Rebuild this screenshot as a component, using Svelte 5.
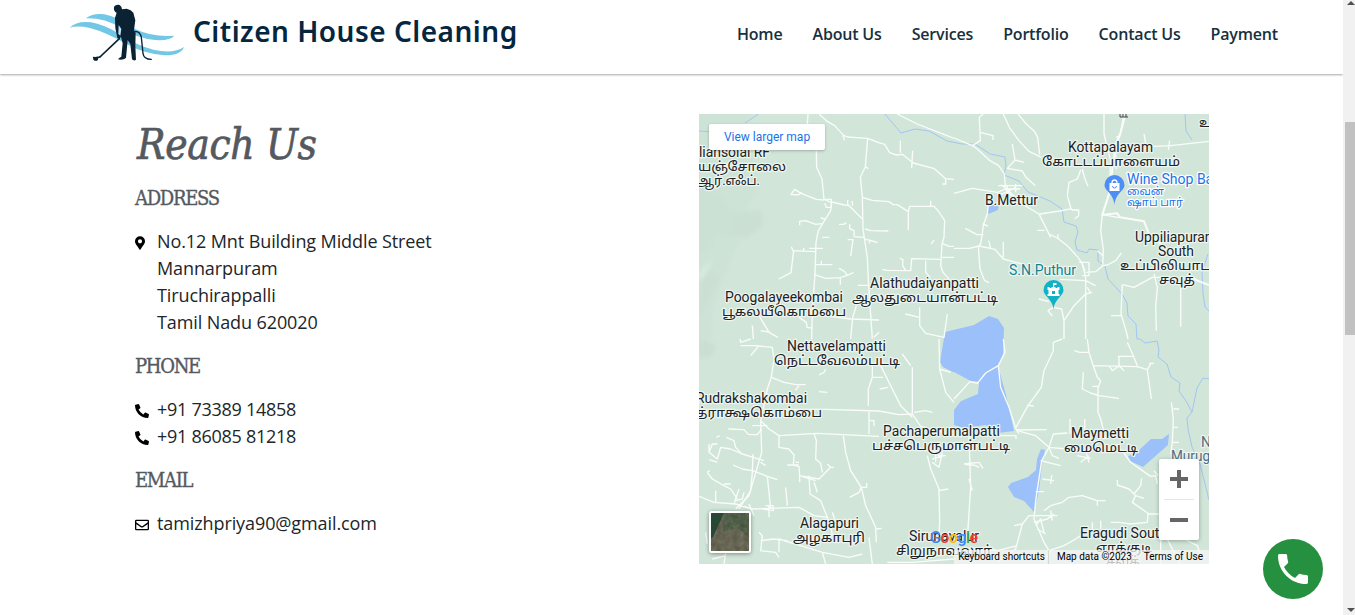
<script>
  const nav = ['Home', 'About Us', 'Services', 'Portfolio', 'Contact Us', 'Payment'];
  const address = ['No.12 Mnt Building Middle Street', 'Mannarpuram', 'Tiruchirappalli', 'Tamil Nadu 620020'];
  const phones = ['+91 73389 14858', '+91 86085 81218'];

  // text, x, baseline, width, size, kind
  const labels = [
    ['liansolai RF', 0, 43, 71, 14, ''],
    ['யஞ்சோலை', -1, 57, 88, 13, ''],
    ['ஆர்.எஃப்.', -2, 71, 63, 13, ''],
    ['Poogalayeekombai', 26, 188, 118, 14, ''],
    ['பூகலயீகொம்பை', 23, 202, 124, 13, ''],
    ['Alathudaiyanpatti', 171, 174, 109, 14, ''],
    ['ஆலதுடையான்பட்டி', 153, 188, 146, 13, ''],
    ['Kottapalayam', 369, 38, 85, 14, ''],
    ['கோட்டப்பாளையம்', 343, 52, 138, 13, ''],
    ['B.Mettur', 286, 91, 53, 14, ''],
    ['S.N.Puthur', 310, 161, 67, 14, 'teal'],
    ['Wine Shop Bar', 428, 70, 91, 14, 'blue'],
    ['வைன்', 428, 81, 37, 11, 'blue'],
    ['ஷாப் பார்', 428, 92, 56, 11, 'blue'],
    ['Uppiliapuram', 436, 128, 82, 14, ''],
    ['South', 459, 142, 36, 14, ''],
    ['உப்பிலியாட', 421, 156, 90, 13, ''],
    ['சவுத்', 460, 170, 36, 13, ''],
    ['உ', 500, 13, 13, 13, ''],
    ['Nettavelampatti', 88, 237, 99, 14, ''],
    ['நெட்டவேலம்பட்டி', 75, 251, 126, 13, ''],
    ['Rudrakshakombai', -3, 289, 111, 14, ''],
    ['த்ராக்ஷகொம்பை', -3, 303, 126, 13, ''],
    ['Pachaperumalpatti', 184, 322, 117, 14, ''],
    ['பச்சபெருமாள்பட்டி', 173, 336, 138, 13, ''],
    ['Alagapuri', 101, 414, 59, 14, ''],
    ['அழகாபுரி', 94, 428, 72, 13, ''],
    ['Sirunavalur', 210, 427, 70, 14, ''],
    ['சிறுநாவலூர்', 197, 441, 96, 13, ''],
    ['Maymetti', 372, 324, 58, 14, ''],
    ['மைமெட்டி', 365, 338, 74, 13, ''],
    ['Eragudi South', 381, 424, 87, 14, ''],
    ['எரக்குடி', 397, 438, 56, 13, ''],
    ['சவுத்', 407, 452, 34, 13, ''],
    ['N', 502, 333, 10, 14, 'slate'],
    ['Murug', 472, 347, 39, 14, 'slate']
  ];
</script>

<div class="page">
  <main>
    <header>
      <div class="brand">
        <svg class="logo" width="125" height="70" viewBox="0 0 375 210">
          <g fill="#72c6e6">
            <path d="M14 83Q35 62 78 67Q115 73 163 101Q217 137 265 149Q325 163 357 141Q347 167 298 166Q240 162 186 133Q124 97 75 84Q37 76 14 83Z" />
            <path d="M62 55Q84 39 118 43Q160 51 211 87Q261 112 328 107Q315 123 270 120Q215 114 167 83Q117 53 62 55Z" />
          </g>
          <g fill="#0a2233">
            <path d="M147 20Q153 12 164 15Q171 20 171 28L185 26Q199 29 205 38L211 61L207 90L212 98L211 137L213 179Q207 184 201 178L196 132L188 120L183 174Q174 181 159 178Q161 173 169 170L173 130L168 111Q162 118 157 114L151 84L150 54L155 38Q145 34 147 20Z" />
            <path d="M85 172L99 170V179L96 182H88L85 178Z" />
          </g>
          <path d="M161 75L160 102L166 107L169 87Z" fill="#b9e4f3" />
          <g fill="none" stroke="#0a2233" stroke-linecap="round">
            <path d="M163 116L108 168Q104 174 86 173" stroke-width="5" />
            <path d="M211 94Q226 95 229 112L234 160Q236 178 259 178" stroke-width="4" />
          </g>
        </svg>
        <span class="name">Citizen House Cleaning</span>
      </div>
      <nav>
        {#each nav as item}<a href="#top">{item}</a>{/each}
      </nav>
    </header>

    <div class="content">
      <section class="contact">
        <h1>Reach Us</h1>
        <h2>ADDRESS</h2>
        <div class="row">
          <svg class="pin" viewBox="0 0 384 512"><path d="M172 501C27 291 0 270 0 192a192 192 0 1 1 384 0c0 78-27 99-172 309a24 24 0 0 1-40 0zM192 272a80 80 0 1 0 0-160 80 80 0 0 0 0 160z" /></svg>
          <div>{#each address as line}<p>{line}</p>{/each}</div>
        </div>
        <h2>PHONE</h2>
        {#each phones as phone}
          <div class="row digits">
            <svg viewBox="0 0 512 512"><path d="M493 25l-104-24a24 24 0 0 0-27 14l-48 112a24 24 0 0 0 7 28l61 50a371 371 0 0 1-177 177l-50-61a24 24 0 0 0-28-7L15 362a24 24 0 0 0-14 27l24 104a24 24 0 0 0 23 19c257 0 464-208 464-464a24 24 0 0 0-19-23z" transform="matrix(-1 0 0 1 512 0)" /></svg>
            <p>{phone}</p>
          </div>
        {/each}
        <h2>EMAIL</h2>
        <div class="row">
          <svg viewBox="0 0 512 512"><path d="M464 64H48a48 48 0 0 0-48 48v288a48 48 0 0 0 48 48h416a48 48 0 0 0 48-48V112a48 48 0 0 0-48-48zm0 48v41c-22 18-58 47-134 106-17 13-50 46-74 45-24 1-57-32-74-45C106 200 70 171 48 153v-41h416zM48 400V215c23 18 55 43 104 82 22 17 60 55 104 55 44 0 81-37 104-55 49-39 81-64 104-82v185H48z" /></svg>
          <p>tamizhpriya90@gmail.com</p>
        </div>
      </section>

      <section class="map">
        <svg class="canvas" width="510" height="450" viewBox="0 0 510 450">
          <defs><filter id="soft"><feGaussianBlur stdDeviation="2" /></filter></defs>
          <rect width="510" height="450" fill="#d1e6d9" />
          <g filter="url(#soft)" fill="#c9dfd2">
            <path d="M-5 -5H52L45 25L55 45L62 70L50 90L44 120L30 150L15 190L12 225L0 245H-5Z" opacity=".4" />
            <path d="M0 72Q22 76 28 92L42 100L36 125L18 118L10 135L0 140Z" opacity=".7" />
            <path d="M40 100L62 95L64 112L46 125L35 118Z" opacity=".8" />
            <path d="M0 168L12 155L20 165L8 190L0 205Z" opacity=".6" />
            <path d="M0 225L18 232L12 243L0 244Z" />
          </g>
          <path d="M0 160L14 144L8 156L0 168Z" fill="#dcede1" filter="url(#soft)" />

          <!-- reservoirs -->
          <g fill="#9cc0f9">
            <path d="M246 218L275 211L290 202L299 205L305 214L304 240L299 252L307 281L315 317L299 319L287 311L265 314L255 311V296L262 287L279 280L280 268L272 267L244 253L241 248Z" />
            <path d="M255 258L271 267L280 268L278 279L264 286L255 290Z" fill="#d1e6d9" />
            <path d="M342 335L346 336L343 350L340 377L335 398L325 387L315 383L309 373L312 369L329 363L337 356L338 345Z" />
            <path d="M429 342L437 339L452 325L463 325L470 320L469 331L444 353L431 347Z" />
            <path d="M289 91L300 91L299 96L289 100Z" />
          </g>

          <!-- streams -->
          <g fill="none" stroke="#a3c5f2" stroke-width="1" stroke-linejoin="round">
            <path d="M0 17L15 18M46 9L61 -1M185 -1L202 19L216 15L230 17L248 27L263 30L276 30L291 40L306 43L307 52L305 61L320 67L329 78L351 87L363 95L365 108L377 112L379 118L376 128L378 136L388 139L390 135L399 136L399 147L406 152L409 165L423 180L428 189L429 202L437 210L438 225L441 225L446 229L458 227L460 236L459 243L468 250L472 263L481 269L480 277L487 287L493 298L488 304L489 315L493 333L501 350L510 386" />
            <path d="M486 0L487 17L493 26M493 298L498 274L504 264L510 265M509 140L503 158L504 180L506 193L510 197" />
          </g>

          <!-- roads, drawn at three units per pixel in each quarter -->
          <g class="roads" transform="scale(.33333)">
            <path d="M360 0L386 23L407 35L434 64L445 69L506 73L539 86L557 91L572 116L592 123L610 121L643 147L706 164L740 194L765 196M432 62L436 79M506 73L499 158L484 190L490 249L492 345L505 430L508 500L520 675M594 0L655 30L765 73M327 0L325 30M352 110L353 160L369 195L375 256L398 266L395 290L358 350L351 385L348 480L340 590L338 675" />
            <path d="M375 258L352 256L306 238L287 226L276 241L298 243L308 234M377 256H397V280L382 280L377 268M398 264L437 273L449 274L490 315M446 257V273M459 261L461 275M302 334V322L320 320L350 331L370 329M365 312L378 315M490 250L520 259L570 263L583 272L595 272L628 293V348M628 293L632 277L705 277L720 294L737 320L735 370L729 390L725 456L732 475L755 500M695 260V276M498 345L515 350L568 351M420 331L434 331L442 326M452 331V344L465 350L466 368L495 370M446 377L462 377L455 426M498 376L514 379L536 386M514 379L510 387" />
            <path d="M277 398L282 410L349 413M284 410L276 476L239 495M314 402V412M330 403H372M370 370H391M351 452L400 452M367 440V452M347 482L380 493L424 491L450 482L463 476M445 483L436 472L420 463M424 491V512M550 466L565 469L635 470L638 434L725 436M602 433L612 437L611 455L620 470M680 440V475L694 491M477 514H509M604 80V116M641 110L638 162M499 158L508 164M740 194V210L730 210M697 390L705 378M730 388L750 397H765M730 430H765M619 600L662 610M662 580V635L680 658L735 670L745 600M340 600L455 615L540 618M472 575L461 610L455 675M180 605L210 655L237 670M185 650L215 655M160 635L163 675M300 610L322 625L324 640L338 642M525 670L540 655" />
          </g>
          <g class="roads" transform="translate(255 0) scale(.33333)">
            <path d="M0 72L55 95L70 105L108 140L134 155L151 180L155 225M55 95L79 80L76 10L88 0M79 55L117 65V78M148 0L166 40L195 80L225 112L262 130M192 0L217 30L241 52L251 70L257 122M175 90L183 138L160 163L205 171L216 190L244 215M183 138L210 145M0 238L55 223L130 235L155 225L180 255L255 300L285 360L310 372L340 395L372 430L385 450L395 490V675M257 300L318 291L353 284M353 288H374V305L362 314M340 245L345 205L370 195L380 168M340 245L352 288M385 165L393 196L402 217" />
            <path d="M133 215H205M135 245L185 220M142 212L185 250M160 215V245M155 225H198M185 210V235M103 270L100 300L89 330L80 390L73 397L78 465L92 500L105 506M34 343L69 362L89 362M85 330L102 336M0 403H47L75 396L123 406L148 435L205 450M104 380L110 403M148 383V430M250 349H272M285 360L290 370M312 360V372" />
            <path d="M450 0V60L470 140L465 240L445 302L495 311M510 0L500 55L484 90L487 165M486 70L500 65M565 90L600 97L650 95L765 82M570 60L575 88M647 80L643 108M445 302L440 350L448 405L446 455L425 473L395 475M447 455L460 453L485 440L502 417M447 425L430 410M505 512L540 520L595 490H640M505 512L501 600L516 650L522 675M471 605H502M600 480L610 520L605 580L607 650M680 490V638M395 540L360 575L330 620V675M330 620L323 585L298 580L282 590L295 606M375 445H405V485H385M393 470L380 440M395 500L425 515M400 520L410 538M395 540L415 535M318 496L395 500M255 555L285 563" />
          </g>
          <g class="roads main" transform="translate(255 0) scale(.33333)">
            <path d="M512 10L500 55L484 100L465 240L445 302L490 298L498 310L570 322L585 360L620 390M700 480L730 500L765 513" />
          </g>
          <g class="roads" transform="translate(0 225) scale(.33333)">
            <path d="M125 20L170 20L220 25L225 60L217 115L205 150L185 245L188 340L150 470L110 510M217 115L255 130L290 137H320M123 0L125 10L155 0M155 50L180 20M290 153L300 140M360 158L385 160M260 211L380 211L540 216L600 227L640 225L665 262L765 290M185 245L210 270L240 290L355 283L430 287L540 292M520 80V115L508 150V200M510 218V285M520 115H552M545 80L570 130L605 200L640 235M542 150L568 145M640 85L640 225M610 45L635 80M720 0L722 90L740 160L765 190M722 90L755 100M645 220L680 215L700 220M512 245H525V262" />
            <path d="M380 90L375 100L360 108M88 270L135 272L148 286L175 287L188 270M160 260H205M240 290V325L270 330L285 348L283 378L300 382L302 410L360 420L395 385H405M345 283L352 305L350 360L365 373L370 400M265 378H298M302 410V430M330 410L333 465L365 485L385 535M30 315V340L55 360L65 325L95 330L130 345L195 365M30 340L40 315L55 315M52 295L62 290M30 362L55 370M82 295L105 305L110 325L128 345M185 370L200 380M162 345L160 400L155 455L120 510M102 378L130 390L160 395L205 412L235 422M25 400L40 420L75 440L95 450L115 480M25 400L32 395M205 412L215 510M75 435H95M0 472L45 490L110 495L160 510L300 505L345 530L385 535" />
            <path d="M260 445L265 500M150 495L165 530M200 500H222V515M210 500V535M192 510L225 515M105 495L120 450M110 485L130 480L135 460M50 455V490M433 290L440 340L455 395L487 445L500 500L530 565L532 610M487 445L480 460L452 475M487 445H503V432M685 350L695 390L720 450L722 550L720 585M720 455L748 450M700 360L735 350M700 370L720 385L730 340M710 320V370M715 350H740M290 370H300M345 430L355 460M310 413L350 425M395 385L385 375" />
            <path d="M180 580L190 590L185 635L230 640L240 655M185 605L225 600L265 605M240 640V600L370 640L450 655L490 645M370 640L380 675M510 595L520 675M532 570L548 568M80 640L75 675M40 660L80 650M20 580L25 615M385 535L395 560L400 590M400 520L410 550M565 670H640L765 660" />
          </g>
          <g class="roads" transform="translate(255 225) scale(.33333)">
            <path d="M148 0L153 40L133 80L140 145L165 205L186 270L200 278L245 290L285 325L340 330M133 80L95 102L70 133L48 128L0 180M325 0L298 10V35L270 95L262 145L222 200L186 265M219 199L239 201M186 273L278 272M0 290H186V300M45 290L50 445L40 600M30 375L75 370L87 388M35 377L60 378L75 385M45 420L55 455M186 270L195 285" />
            <path d="M400 0L405 40L417 78L430 115L440 125L432 148V220L440 240L455 300M361 35L377 40H405M417 80L550 83L580 92L592 180M520 10L537 48L550 80M492 52H537M495 52V85M465 80L475 95L495 80L510 95M585 73H600M580 92L590 75M388 100L385 150L410 162L435 170L495 178M415 142H432M652 190L658 240L655 310L650 345M658 210H675M658 265H672M655 310H675M285 325L263 365L245 485L240 540L270 610L285 635M285 325L298 285L340 282M285 325L295 350L315 358M348 240V285M260 365L320 380M265 420L300 425M293 408L290 435M245 458H270M392 240V270" />
            <path d="M485 315L512 345L530 370L565 395L590 412L605 410L610 435M600 395L612 410M490 422V438L525 450L545 470L535 490L585 525L615 525M545 470L570 478M540 465L560 440L563 418M535 490L545 470M270 515L290 500L325 490L345 475L385 470L430 485H455M430 485V500M582 525L580 550L530 555L495 550H470M235 530H310M240 550L280 540L300 525M245 560L260 540L270 580M250 570L275 585M290 515L295 545M180 560L205 555L225 530H235M205 555L185 630L130 670M285 635L330 620L365 600L380 590M100 625L130 635L190 620M290 635L270 670M370 350L410 358M395 335L405 370M380 370L405 350M440 545V570M415 550V570M620 520V675M640 600L660 640L680 675M690 600L730 620L740 650" />
          </g>

          {#each labels as [text, x, y, width, size, kind]}
            <text class="label {kind}" {x} {y} font-size={size} textLength={width} lengthAdjust="spacingAndGlyphs">{text}</text>
          {/each}
          <path d="M421 -1V3H427V-1M424 0V3M427 3H429" stroke="#444" fill="none" />

          <g transform="translate(415.5 71)">
            <path d="M0 20C-1 8-10 6-10 0a10 10 0 0 1 20 0C10 6 1 8 0 20Z" fill="#4c8df6" />
            <path d="M-5-2H5V6H-5Z" fill="#fff" /><path d="M-2.5-2a2.5 3 0 0 1 5 0" fill="none" stroke="#fff" stroke-width="1.3" /><path d="M-2 1a2 2 0 0 0 4 0" fill="none" stroke="#4c8df6" />
          </g>
          <g transform="translate(354.5 176)">
            <path d="M0 19C-1 9-10 6-10 0a10 10 0 0 1 20 0C10 6 1 9 0 19Z" fill="#12b1c5" />
            <path d="M-6 6V4H-5V0H-6V-3H-4V-2H-2V-3H-.5V-7H3V-5H.7V-3H2V-2H4V-3H6V0H5V4H6V6ZM-1.5 4H1.5V1H-1.5Z" fill="#fff" fill-rule="evenodd" />
          </g>
          <text class="google" x="231" y="429" textLength="48" lengthAdjust="spacing"><tspan fill="#4285f4">G</tspan><tspan fill="#ea4335">o</tspan><tspan fill="#fbbc05">o</tspan><tspan fill="#4285f4">g</tspan><tspan fill="#34a853">l</tspan><tspan fill="#ea4335">e</tspan></text>
        </svg>

        <a class="larger" href="#map">View larger map</a>
        <div class="thumb">
          <svg width="38" height="38" viewBox="0 0 38 38">
            <defs><filter id="ground" x="0" y="0" width="1" height="1"><feTurbulence type="fractalNoise" baseFrequency=".18" numOctaves="3" seed="7" /><feColorMatrix values="0 0 0 0 .36  0 0 0 0 .38  0 0 0 0 .28  .9 .7 0 0 -.45" /></filter></defs>
            <rect width="38" height="38" fill="#424d37" />
            <path d="M12 0L0 28V38H38V24L26 15L13 12Z" fill="#5a5847" />
            <path d="M13 0H38V21L27 15L12 18Z" fill="#3f5039" />
            <rect width="38" height="38" filter="url(#ground)" opacity=".5" />
            <path d="M0 0H13L2 24L0 25Z" fill="#214432" opacity=".85" />
          </svg>
        </div>
        <div class="zoom">
          <button aria-label="Zoom in"><svg width="18" height="18" viewBox="0 0 18 18"><path d="M7 0h4v7h7v4h-7v7H7v-7H0V7h7z" /></svg></button>
          <i></i>
          <button aria-label="Zoom out"><svg width="18" height="18" viewBox="0 0 18 18"><path d="M0 7h18v4H0z" /></svg></button>
        </div>
        <div class="legal"><span class="keys">Keyboard shortcuts</span><span class="data">Map data ©2023</span><span class="terms">Terms of Use</span></div>
      </section>
    </div>

    <a class="call" href="#call" aria-label="Call"><svg width="40" height="40" viewBox="0 0 24 24"><path d="M6.6 10.8c1.4 2.8 3.8 5.1 6.6 6.6l2.2-2.2c.3-.3.7-.4 1-.2 1.1.4 2.3.6 3.6.6.6 0 1 .4 1 1V20c0 .6-.4 1-1 1C10.6 21 3 13.4 3 4c0-.6.4-1 1-1h3.5c.6 0 1 .4 1 1 0 1.2.2 2.5.6 3.6.1.3 0 .7-.2 1z" /></svg></a>
  </main>
  <aside><b class="up"></b><b class="bar"></b><b class="down"></b></aside>
</div>

<style>
  :global(body) { margin: 0; overflow: hidden; background: #fff; }
  .page { display: flex; height: 615px; width: 1355px; overflow: hidden; font-family: "Open Sans", sans-serif; }
  main { width: 1343px; position: relative; overflow: hidden; }
  header { height: 74px; box-sizing: border-box; display: flex; justify-content: space-between; padding: 0 65px; box-shadow: 0 1px 2px rgba(0, 0, 0, .35); }
  .brand { display: flex; }
  .logo { display: block; }
  .name { margin: 11px 0 0 3px; font: 600 28px/40px "Noto Sans", sans-serif; letter-spacing: .5px; color: #04263f; white-space: nowrap; }
  nav { display: flex; gap: 30px; padding-top: 23px; }
  nav a { font: 600 16px/22px "Open Sans", sans-serif; letter-spacing: -.18px; color: #17303d; text-decoration: none; white-space: nowrap; }
  .content { display: flex; padding: 40px 134px 0 135px; justify-content: space-between; }
  .contact { width: 420px; color: #212529; }
  h1 { margin: 2px 0 0 2px; height: 52px; font: italic 400 42px/58px "DejaVu Serif Condensed", "DejaVu Serif", serif; letter-spacing: -.3px; color: #54595f; -webkit-text-stroke: .7px #54595f; white-space: nowrap; }
  h2 { margin: 16px 0 17px; height: 27px; font: 400 20px/28px "DejaVu Serif Condensed", "DejaVu Serif", serif; letter-spacing: -1.3px; color: #54595f; -webkit-text-stroke: .35px #54595f; }
  .row { display: flex; min-height: 27px; font-size: 18px; line-height: 27px; letter-spacing: -.1px; }
  .digits { letter-spacing: -.27px; }
  .row > svg { width: 14px; height: 14px; margin: 8px 8px 0 0; fill: #000; }
  .row > .pin { width: 10px; margin: 8px 12px 0 0; }
  .row p { margin: 0; white-space: nowrap; }
  .map { position: relative; width: 510px; height: 450px; overflow: hidden; font-family: Roboto, sans-serif; }
  .canvas { display: block; }
  .roads { fill: none; stroke: #fafcfb; stroke-width: 4; stroke-linejoin: round; }
  .main { stroke-width: 6; }
  .label { font-family: Roboto, "Noto Sans Tamil", sans-serif; fill: #202124; stroke: #edf5f0; stroke-width: 2.5px; stroke-linejoin: round; paint-order: stroke; }
  .blue { fill: #1a73e8; stroke: #fff; }
  .teal { fill: #128391; }
  .slate { fill: #4f6d83; }
  .google { font: 500 16px Roboto, sans-serif; }
  .larger { position: absolute; left: 10px; top: 10px; width: 116px; height: 26px; font-size: 12px; line-height: 26px; text-align: center; color: #1a73e8; background: #fff; border-radius: 2px; box-shadow: 0 1px 3px rgba(0, 0, 0, .25); text-decoration: none; }
  .thumb { position: absolute; left: 10px; bottom: 11px; border: 2px solid #fff; border-radius: 3px; overflow: hidden; box-shadow: 0 1px 4px rgba(0, 0, 0, .4); }
  .thumb svg { display: block; }
  .zoom { position: absolute; right: 10px; top: 345px; width: 40px; height: 81px; background: #fff; border-radius: 2px; box-shadow: 0 1px 4px rgba(0, 0, 0, .3); }
  .zoom button { display: grid; place-items: center; width: 40px; height: 40px; padding: 0; border: 0; background: none; fill: #666; }
  .zoom i { display: block; height: 1px; margin: 0 5px; background: #e6e6e6; }
  .legal { position: absolute; right: 0; bottom: 0; height: 14px; display: flex; font-size: 10px; line-height: 14px; color: #000; white-space: nowrap; }
  .legal span { background: rgba(245, 245, 245, .75); padding: 0 6px 0 4px; }
  .legal .keys { padding-right: 3px; border-right: 1px solid #cddbd3; }
  .legal .data { padding: 0 8px; }
  .call { position: absolute; right: 20px; bottom: 16px; width: 60px; height: 60px; border-radius: 50%; background: #25903f; display: grid; place-items: center; }
  .call svg { fill: #fff; }
  aside { width: 12px; background: #f1f1f1; display: flex; flex-direction: column; align-items: flex-end; }
  .up { margin: 1px 0 0; border: 4px solid transparent; border-top: 0; border-bottom-color: #505050; }
  .bar { width: 10px; height: 213px; margin-top: 117px; background: #c1c1c1; }
  .down { margin: auto 0 3px; border: 4px solid transparent; border-bottom: 0; border-top-color: #505050; }
</style>
